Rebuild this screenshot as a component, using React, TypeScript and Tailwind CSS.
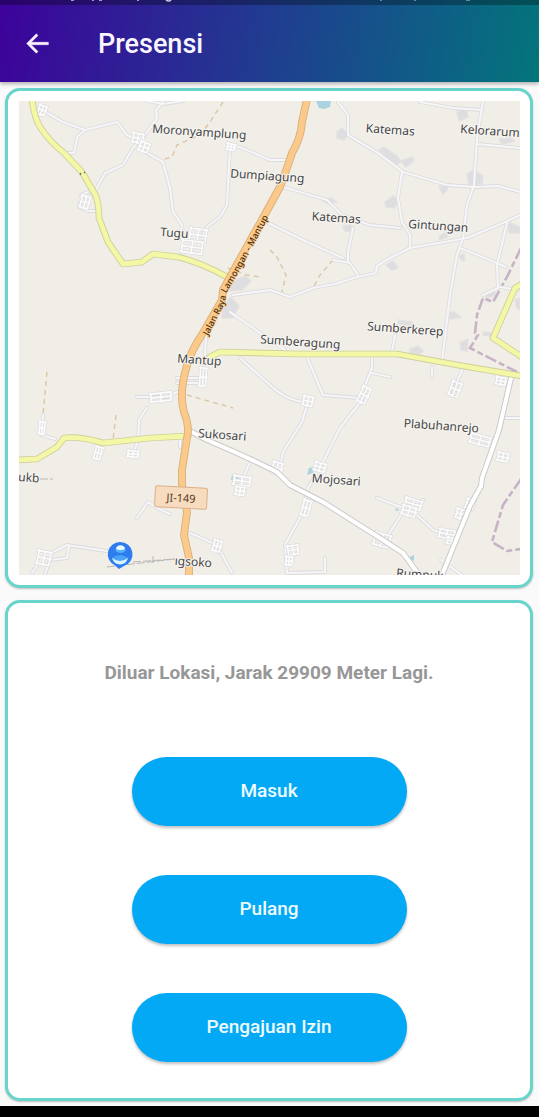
import React from "react";

const lanes = [
  "M42 110L63 122L85 130L117 122L127 135L134 139",
  "M85 130L77 137L74 153L68 153",
  "M147 101L163 104L183 101",
  "M163 102L156 110L157 118L143 138L133 148L123 165L105 173L97 188L90 197",
  "M140 148L147 153L163 162L170 188L173 212L182 225L180 236",
  "M230 148L227 205L220 217L207 227L202 236",
  "M233 145L247 150L270 160L288 160",
  "M97 211L88 211L79 207L81 195L88 192",
  "M338 102L348 115L348 135L378 153L403 172L447 185L475 187L498 186L520 192",
  "M420 102L453 108L482 110",
  "M483 101L477 138L474 185L467 205L463 238L457 255L450 295L442 362",
  "M477 144L520 148",
  "M402 172L398 198L402 222L410 235L410 248",
  "M283 187L327 200L342 215L370 225L400 228",
  "M262 220L307 242L343 258",
  "M353 228L348 252L348 262",
  "M520 215L503 223L467 238L410 248L390 258L377 266L376 273L357 277L335 284L313 288L290 297L270 290L233 295",
  "M333 260L350 263L358 275",
  "M507 223L497 265L498 288L483 295",
  "M460 248L480 256L506 267",
  "M500 287L518 290",
  "M230 312L260 333L285 350",
  "M207 322L203 383L177 383",
  "M240 358L270 385Q288 402 307 402",
  "M307 357L320 388L323 395L360 398L372 368L372 357",
  "M372 373L390 377",
  "M308 402L302 422L283 452L280 468",
  "M362 400L340 428L320 468L308 488L303 512L285 545L287 573L325 572L325 558",
  "M377 498L403 508L423 500",
  "M403 512L385 540",
  "M417 515L433 530L455 538",
  "M190 533L217 545L232 573",
  "M32 573L43 557L67 545L107 551",
  "M45 574L50 560L67 558L69 546",
  "M137 518L148 502L157 508L170 514",
  "M252 458L240 485",
  "M147 408L139 420L138 440L133 455",
  "M137 397L167 397L181 390",
  "M177 378L203 378",
  "M43 415L41 435L55 439",
  "M503 418L520 418",
  "M395 335L392 352",
  "M462 370L453 392",
  "M432 367L432 377",
  "M441 560L462 575",
  "M180 447L180 437",
];

const whiteRoads = [
  "M188 430L207 440Q245 456 277 472L290 485L323 502L383 540L403 553L419 575",
  "M511 378L499 430L482 478L481 486L470 506L442 575",
];

const yellowRoads = [
  "M32 99Q34 117 40 127Q50 142 63 152L82 172L96 196Q99 206 99 218L108 242L123 264L142 262L153 254L178 257Q200 262 229 278",
  "M210 357L220 352L300 354L397 354L463 366L522 376",
  "M17 460L37 459L57 447L64 438Q80 436 103 443L150 438L187 436",
  "M522 284L515 288L493 338L522 357",
];

const orangeRoad =
  "M307 99L302 122Q301 138 292 153L288 165L280 187L269 207L240 259L223 290L222 300L203 333Q190 352 186 369Q179 394 184 412Q190 428 187 438L182 470L182 485L187 512L184 535L189 558L189 577";

const tracks = [
  "M223 102L210 122L200 135L177 145L172 157L162 160",
  "M270 250L277 257L286 275L282 292",
  "M333 260L320 275L313 288",
  "M228 268L246 275L260 277",
  "M187 395L233 408",
  "M47 372L43 415",
  "M116 415L113 440",
];

const borders = [
  "M521 248L508 275L493 302L483 298L477 315L475 333L478 335L470 348L517 372",
  "M521 479L503 505L492 542L507 551L521 549",
];

/* x, y, width, height, angle */
const villages = [
  [42, 110, 9, 9, 20],
  [138, 138, 12, 9, 10],
  [144, 147, 11, 9, 20],
  [85, 202, 10, 12, 15],
  [198, 235, 18, 12, 8],
  [192, 247, 22, 12, 8],
  [203, 377, 8, 18, 4],
  [161, 397, 22, 8, -6],
  [231, 147, 9, 6, 10],
  [308, 401, 11, 9, 10],
  [364, 395, 10, 16, 25],
  [277, 468, 11, 11, 15],
  [320, 467, 12, 8, 15],
  [306, 508, 9, 15, 15],
  [242, 481, 18, 9, 8],
  [240, 491, 10, 8, 8],
  [382, 540, 17, 12, 15],
  [413, 504, 18, 9, 15],
  [409, 511, 15, 9, 15],
  [480, 440, 21, 9, 15],
  [503, 457, 12, 8, 10],
  [461, 514, 11, 9, 15],
  [470, 504, 9, 9, 15],
  [447, 534, 17, 8, 10],
  [44, 558, 14, 13, 10],
  [217, 546, 9, 11, 15],
  [293, 550, 12, 9, -10],
  [289, 561, 8, 8, 5],
  [98, 453, 8, 12, 15],
  [133, 454, 12, 6, 5],
  [455, 389, 11, 14, 20],
  [501, 381, 11, 7, 10],
  [42, 428, 7, 12, 5],
  [452, 541, 11, 6, 10],
];

const builtUp = [
  "M337 132l5-4 6 6-4 6-7-2z",
  "M379 150l5-3 13 9 4 6-6 3-9-8z",
  "M401 161l12-4 1 4-8 6z",
  "M457 112l9-4 2 9-9 4z",
  "M467 174l7-4 9 6-1 8-13 1z",
  "M439 187l9-2-1 5-4 4z",
  "M385 202l8-6 6 5-5 7-8-1z",
  "M231 282l14-6 6 5-9 9-13 1z",
  "M222 306l9-9 8 9-6 12-11 0z",
  "M386 265l7-4 5 7-7 2z",
  "M448 313l6-1 7 5-11 2z",
  "M410 349l8-3 5 5-4 4-9-1z",
  "M460 343l8-4-1 12-6-1z",
  "M321 199l10-1 6 4-11 1z",
  "M343 226l8-1 0 6-6 0z",
  "M440 236l6-4 2 5-9 3z",
  "M508 222l12 5 0 6-11 0z",
  "M483 294l10-4 3 5-8 3z",
  "M499 139l12-1 4 3-13 3z",
  "M398 320l14 2-1 4-13-2z",
  "M459 256l5-2 1 6-3 1z",
  "M483 332l9 1 2 4-11-2z",
  "M515 300l5-2 0 12-4-3z",
];

const water = [
  "M316 101h15l-1 6-6 2-5-1z",
  "M232 475l7 1-1 6-7-2z",
  "M309 468l5-1-1 6-6 2z",
  "M408 558l6-3 0 6z",
  "M395 508l5 2-4 1z",
];

type PlaceLabel = { name: string; x: number; y: number; start?: boolean };

const places: PlaceLabel[] = [
  { name: "Moronyamplung", x: 199, y: 136 },
  { name: "Dumpiagung", x: 267, y: 180 },
  { name: "Katemas", x: 390, y: 134 },
  { name: "Kelorarum", x: 460, y: 133, start: true },
  { name: "Tugu", x: 174, y: 237 },
  { name: "Katemas", x: 336, y: 222 },
  { name: "Gintungan", x: 438, y: 230 },
  { name: "Sumberagung", x: 300, y: 346 },
  { name: "Sumberkerep", x: 405, y: 333 },
  { name: "Mantup", x: 199, y: 364 },
  { name: "Sukosari", x: 222, y: 439 },
  { name: "Plabuhanrejo", x: 441, y: 430 },
  { name: "Mojosari", x: 336, y: 484 },
  { name: "ukb", x: 18, y: 481, start: true },
  { name: "ıgsoko", x: 193, y: 566 },
  { name: "Rumpuk", x: 396, y: 577, start: true },
];

function Roads({ paths, color, width }: { paths: string[]; color: string; width: number }) {
  return (
    <g fill="none" stroke={color} strokeWidth={width} strokeLinejoin="round" strokeLinecap="round">
      {paths.map((d) => (
        <path key={d} d={d} />
      ))}
    </g>
  );
}

function Village({ box }: { box: number[] }) {
  const [x, y, w, h, angle] = box;
  const l = -w / 2;
  const t = -h / 2;
  const d = `M${l} ${t}h${w}M${l + 1} 0h${w - 1}M${l} ${-t}h${w - 2}M${l + 1} ${t - 1}v${h}M0 ${t}v${h + 1}M${-l - 1} ${t}v${h}`;
  return (
    <g transform={`translate(${x} ${y}) rotate(${angle})`} fill="none" strokeLinecap="round">
      <path d={d} stroke="#dddcde" strokeWidth="3.2" />
      <path d={d} stroke="#fcfcfd" strokeWidth="1.7" />
    </g>
  );
}

function LocationMap() {
  return (
    <svg viewBox="19 101 501 474" className="block h-auto w-full bg-[#f1eee8]" role="img" aria-label="Peta lokasi">
      <g fill="#dedddf" stroke="#e3e1e1" strokeWidth="1.5" strokeLinejoin="round">
        {builtUp.map((d) => (
          <path key={d} d={d} />
        ))}
      </g>
      <g fill="#aad3df">
        {water.map((d) => (
          <path key={d} d={d} />
        ))}
      </g>
      <g fill="none" stroke="#dcc5a4" strokeWidth="1.4" strokeDasharray="5 4">
        {tracks.map((d) => (
          <path key={d} d={d} />
        ))}
      </g>
      <g fill="none" stroke="#c8b2c6" strokeWidth="2.6" strokeDasharray="12 3 6 3">
        {borders.map((d) => (
          <path key={d} d={d} />
        ))}
      </g>
      <Roads paths={lanes} color="#dcdbdd" width={3.8} />
      <Roads paths={lanes} color="#f6f5f7" width={2.2} />
      {villages.map((box) => (
        <Village key={box.join()} box={box} />
      ))}
      <path d="M107 567L175 559M40 479h13M153 556v7M133 562l42-3" fill="none" stroke="#b9b7b5" strokeWidth="1" strokeDasharray="8 2" />
      <Roads paths={whiteRoads} color="#cbcacb" width={6} />
      <Roads paths={whiteRoads} color="#ffffff" width={4} />
      <Roads paths={yellowRoads} color="#cdd09c" width={6.6} />
      <Roads paths={yellowRoads} color="#f4f7a5" width={4.8} />
      <Roads paths={[orangeRoad]} color="#d8ae7a" width={7.8} />
      <Roads paths={[orangeRoad]} color="#fbca8a" width={6} />
      <path d="M80 175l1-2M84 172l1 1" stroke="#666" strokeWidth="1.2" />

      <path id="main-street" d="M208 336L224 305L227 292L241 268L268 218" fill="none" />
      <text className="font-['Noto_Sans',sans-serif] text-[9px] font-medium" fill="#4b2f10" stroke="#fbcb89" strokeWidth="1.5" paintOrder="stroke">
        <textPath href="#main-street">Jalan Raya Lamongan - Mantup</textPath>
      </text>

      <g transform="rotate(3 181 498)">
        <rect x="155" y="487" width="52" height="21" rx="2" fill="#f8dcc0" stroke="#d9b088" />
        <text x="181" y="502" textAnchor="middle" className="font-['Noto_Sans',sans-serif] text-[11px]" fill="#5a3c1c">
          JI-149
        </text>
      </g>

      <g
        className="font-['Noto_Sans',sans-serif] text-[12px]"
        fill="#454545"
        stroke="#f7f5f2"
        strokeWidth="2"
        strokeLinejoin="round"
        paintOrder="stroke"
      >
        {places.map(({ name, x, y, start }) => (
          <text key={`${name}-${x}`} x={x} y={y} textAnchor={start ? "start" : "middle"} transform={`rotate(4 ${x} ${y})`}>
            {name}
          </text>
        ))}
      </g>

      <path d="M120 542a12.3 12.3 0 0 1 4 24l-5 3-4-3.500a12.300 12.300 0 0 1 5-23.500z" fill="#2f7bf0" />
      <path d="M115.500 551a5 5.500 0 0 1 10 0q-5 4-10 0z" fill="#52b4f8" />
      <path d="M116 549a4.600 4.600 0 0 1 9 0q-4.500 2-9 0z" fill="#e9fbff" />
      <path d="M112 558q8-6 16 0-3 6-8 6t-8-6z" fill="#4ba3f6" />
      <path d="M112 558q8 6 16 0-2 6.500-8 6.500t-8-6.500z" fill="#d8f5ff" />
    </svg>
  );
}

function Card({ children, className }: { children: React.ReactNode; className: string }) {
  return (
    <section className={`rounded-[15px] border-[3px] border-[#68d5cc] bg-white shadow-[0_1px_2px_rgba(0,0,0,0.25)] ${className}`}>
      {children}
    </section>
  );
}

function ActionButton({ children }: { children: React.ReactNode }) {
  return (
    <button
      type="button"
      className="h-[69px] w-full max-w-[275px] rounded-full bg-[#04a9f5] text-[19px] font-medium text-[#effcff] shadow-[0_2px_3px_rgba(0,0,0,0.25)]"
    >
      {children}
    </button>
  );
}

export default function App() {
  return (
    <div className="flex min-h-screen flex-col bg-[#fafafa] font-['Roboto',sans-serif]">
      <header className="relative z-10 bg-[linear-gradient(100deg,#3d029b,#203d90_50%,#0d6185_82%,#03757a)] shadow-[0_2px_4px_rgba(0,0,0,0.3)]">
        <div className="h-[5px] bg-black/30">
          <svg className="block h-[5px] w-full" viewBox="0 0 539 5" preserveAspectRatio="none" aria-hidden="true">
            <path d="M71 0h3M92 0h2M99 0h3M137 0h2M166 0q3 2 5 0" stroke="#cdc6e6" strokeWidth="1.6" fill="none" />
            <path d="M380 0h2M414 0h2M466 0h4" stroke="#6fa5ae" strokeWidth="1.6" fill="none" />
          </svg>
        </div>
        <div className="flex h-[77px] items-center gap-[46px] pl-[23px]">
          <button type="button" aria-label="Kembali" className="text-[#faf2ff]">
            <svg className="size-[29px]" viewBox="0 0 24 24" fill="currentColor" stroke="currentColor" strokeWidth="0.4" aria-hidden="true">
              <path d="M21 11H6.830l5.590-5.590L11 4l-8 8 8 8 1.410-1.410L6.830 13H21v-2z" />
            </svg>
          </button>
          <h1 className="text-[27px] font-medium leading-8 text-[#faf5ff]">Presensi</h1>
        </div>
      </header>

      <main className="flex grow flex-col gap-3 pt-[6px] pr-[6px] pb-[5px] pl-[5px]">
        <Card className="py-[10px] pr-[10px] pl-[11px]">
          <LocationMap />
        </Card>
        <Card className="flex grow flex-col items-center px-4 pt-[58px] pb-9">
          <p className="text-center text-[19px] font-bold leading-6 text-[#979797]">Diluar Lokasi, Jarak 29909 Meter Lagi.</p>
          <div className="mt-[72px] flex w-full flex-col items-center gap-[49px]">
            <ActionButton>Masuk</ActionButton>
            <ActionButton>Pulang</ActionButton>
            <ActionButton>Pengajuan Izin</ActionButton>
          </div>
        </Card>
      </main>
      <div className="h-[11px] bg-black" />
    </div>
  );
}
